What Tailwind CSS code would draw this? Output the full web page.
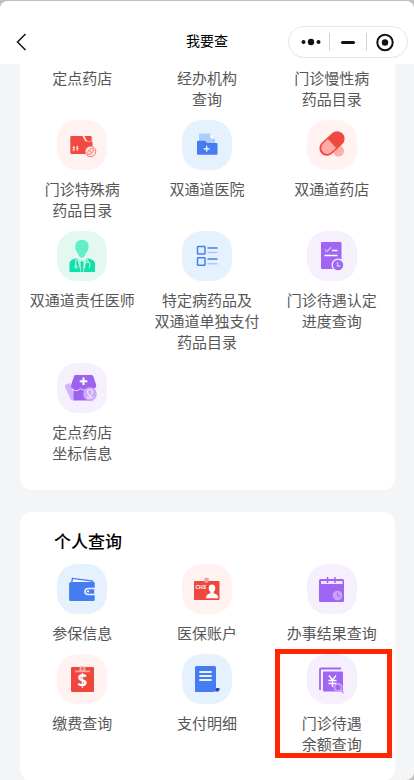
<!DOCTYPE html>
<html lang="zh-CN">
<head>
<meta charset="utf-8">
<meta name="viewport" content="width=device-width, initial-scale=1">
<title>我要查</title>
<script src="https://cdn.jsdelivr.net/npm/@tailwindcss/browser@4"></script>
</head>
<body class="h-screen overflow-hidden bg-[#c2bfc1] pt-px font-['Noto_Sans_CJK_SC',sans-serif]">
<div class="flex h-full flex-col overflow-hidden rounded-t-lg rounded-br-lg bg-[#f4f5f7]">
  <header class="grid shrink-0 grid-cols-[1fr_auto_1fr] items-center bg-white px-1.5 pt-[25px] pb-1.5">
    <button type="button" aria-label="返回" class="flex h-8 w-8 items-center justify-center">
      <svg class="h-5 w-5" viewBox="0 0 20 20" fill="none" stroke="#111" stroke-width="1.500"><path d="M13.500 2 5.500 10l8 8"/></svg>
    </button>
    <h1 class="pb-1 text-sm leading-7 text-black">我要查</h1>
    <div class="flex h-8 w-[120px] items-center justify-self-end rounded-full border border-[#e6e6e6] bg-white">
      <button type="button" aria-label="更多" class="flex flex-1 justify-center pl-1">
        <svg class="h-5 w-5" viewBox="0 0 20 20" fill="#111"><circle cx="2.500" cy="10" r="2"/><circle cx="10" cy="10" r="3.200"/><circle cx="17.500" cy="10" r="2"/></svg>
      </button>
      <span class="h-[18px] w-px bg-[#d4d4d4]"></span>
      <button type="button" aria-label="最小化" class="flex w-9 justify-center">
        <svg class="h-5 w-5" viewBox="0 0 20 20"><path d="M4.500 10.500h11" stroke="#111" stroke-width="3" stroke-linecap="round"/></svg>
      </button>
      <span class="h-[18px] w-px bg-[#d4d4d4]"></span>
      <button type="button" aria-label="关闭" class="flex flex-1 justify-center pr-1">
        <svg class="h-5 w-5" viewBox="0 0 20 20"><circle cx="10" cy="10.500" r="7.700" fill="none" stroke="#111" stroke-width="2"/><circle cx="10" cy="10.500" r="3.200" fill="#111"/></svg>
      </button>
    </div>
  </header>

  <main class="flex flex-col gap-[22px] pr-[19px] pl-5 text-[15px] leading-[21px] text-[#575757]">
    <section class="grid grid-cols-3 rounded-b-xl bg-white pt-[3px] pr-px pb-4 text-center">
      <a href="#" class="pb-[11px]">定点药店</a>
      <a href="#" class="pb-[11px]">经办机构<br>查询</a>
      <a href="#" class="pb-[11px]">门诊慢性病<br>药品目录</a>

      <a href="#" class="flex flex-col items-center gap-2 pb-[11px]">
        <svg class="h-[50px] w-[50px] rounded-[20px] bg-[#fff2f1]" viewBox="0 0 50 50">
          <path d="M14.500 16h11l3 5.500H35q.5 0 .5.500v12H14.500q-1.200 0-1.200-1.200V17.200q0-1.200 1.200-1.200z" fill="#f24940"/>
          <path d="M27.300 16h6.200q1.200 0 1.200 1.200v4h-4.500z" fill="#f24940"/>
          <path d="M15.500 27.500h2.500m-1.200-1.700v5.500M15.500 30l2.600-.8M19 27h2.400m-2.600 1.900h2.800M20.300 25.800v5.500" fill="none" stroke="#ffe0dd" stroke-width=".9"/>
          <circle cx="33.500" cy="31.500" r="5.300" fill="#ffe2df" stroke="#f47870" stroke-width="1"/>
          <g transform="rotate(-42 33.500 31.500)" fill="none" stroke="#f58982"><rect x="30" y="29.700" width="7" height="3.600" rx="1.800"/><path d="M33.500 29.700v3.600"/></g>
        </svg>
        <span>门诊特殊病<br>药品目录</span>
      </a>
      <a href="#" class="flex flex-col items-center gap-2 pb-[11px]">
        <svg class="h-[50px] w-[50px] rounded-[20px] bg-[#e5f2fd]" viewBox="0 0 50 50">
          <path d="M18 13.500h10.500l4.500 5V27H17V14.500q0-1 1-1z" fill="#adcdfb"/>
          <path d="M28.500 13.500v4q0 1 1 1H33z" fill="#fff"/>
          <path d="M16 20.800h7l2 2.200h9.500q1 0 1 1v9.800q0 1-1 1H16q-1 0-1-1v-12q0-1 1-1z" fill="#467cf1"/>
          <path d="M24.700 25.800v6m-3-3h6" stroke="#fff" stroke-width="1.200"/>
        </svg>
        <span>双通道医院</span>
      </a>
      <a href="#" class="flex flex-col items-center gap-2 pb-[11px]">
        <svg class="h-[50px] w-[50px] rounded-[20px] bg-[#fff2f1]" viewBox="0 0 50 50">
          <circle cx="31.500" cy="31" r="5.500" fill="#ffb0a9"/>
          <g transform="rotate(-43 25 23.500)">
            <rect x="10.500" y="16" width="29" height="15" rx="7.500" fill="#f0493f"/>
            <path d="M25 17.500h-6.500a6 6 0 0 0 0 12H25z" fill="#ffaaa3"/>
          </g>
        </svg>
        <span>双通道药店</span>
      </a>

      <a href="#" class="flex flex-col items-center gap-2 pb-[11px]">
        <svg class="h-[50px] w-[50px] rounded-[20px] bg-[#e2f8f1]" viewBox="0 0 50 50">
          <path d="M25 9c4.500 0 7 2.800 6.500 7.500-.3 3-1.600 5.200-3.300 6.500v2L25 27l-3.500-2V23c-1.700-1.300-2.900-3.500-3.200-6.500C17.900 11.800 20.500 9 25 9z" fill="#62efc7"/>
          <path d="M20 27 24 41H12.500V32.500c0-3 3.500-4.500 7.500-5.500zM30 27 26 41h12V32.500c0-3-4-4.500-8-5.500z" fill="#13dfab"/>
          <path d="m21 27.500 4 2.500 4-2.500L26.500 41h-3z" fill="#b4f6e3"/>
          <path d="m25 29.500 1.500 2L26 41h-2l-.5-9.500z" fill="#20d7a7"/>
          <path d="M19.500 27.500q-1.300 4-.8 7M30 27.500q1.500 2 1.300 4m-4 4.700c.3-3 1.600-5.200 3.700-5.200 2.200 0 2.500 3.400.9 6.500M27.300 36l1 1" fill="none" stroke="#d2fff2" stroke-width="1"/>
          <circle cx="19" cy="35.800" r="1.300" fill="none" stroke="#d2fff2" stroke-width=".9"/>
        </svg>
        <span>双通道责任医师</span>
      </a>
      <a href="#" class="flex flex-col items-center gap-2 pb-[11px]">
        <svg class="h-[50px] w-[50px] rounded-[20px] bg-[#e5f2fd]" viewBox="0 0 50 50">
          <g fill="none" stroke="#477ef2" stroke-width="1.500"><rect x="15.500" y="15.500" width="7.500" height="7.500" rx=".6"/><rect x="15.500" y="26.800" width="7.500" height="7.500" rx=".6"/></g>
          <path d="M25.500 17H35.500M25.500 28H35.500" stroke="#477ef2" stroke-width="1.700"/>
          <path d="M25.500 21.500H35.500M25.500 32.700H35.500" stroke="#a9c8fc" stroke-width="1.500"/>
        </svg>
        <span>特定病药品及<br>双通道单独支付<br>药品目录</span>
      </a>
      <a href="#" class="flex flex-col items-center gap-2 pb-[11px]">
        <svg class="h-[50px] w-[50px] rounded-[20px] bg-[#f6f0fe]" viewBox="0 0 50 50">
          <rect x="14" y="11" width="20.500" height="27" rx="1.300" fill="#a066f3"/>
          <path d="m18 18.500 2 2 4-4.200" fill="none" stroke="#d2b4ff" stroke-width="1.400"/>
          <path d="M25 19.500h5.500M17.500 24.500H30.500" stroke="#fff" stroke-width="1.500"/>
          <circle cx="31" cy="34" r="6.500" fill="#f6f0fe"/><circle cx="31" cy="34" r="5.200" fill="#a066f3"/>
          <path d="M30.500 31v4H33.500" fill="none" stroke="#d9c1ff" stroke-width="1.300"/>
        </svg>
        <span>门诊待遇认定<br>进度查询</span>
      </a>

      <a href="#" class="flex flex-col items-center gap-2 pb-[11px]">
        <svg class="h-[50px] w-[50px] rounded-[20px] bg-[#f6f0fe]" viewBox="0 0 50 50">
          <path d="m13 20-4 1.500q-1.500.7-1 2.500l5.500 12q.8 1.500 2.500 1.500h3z" fill="#d1b2fc"/>
          <path d="M18.500 12h16q1.300 0 1.700 1l3 9q.4 2-1.200 3.200L36.500 26v10q0 1.500-1.500 1.500H18q-1.500 0-1.500-1.500V26l-1.700-.8q-1.200-1-.8-3l3-9q.4-1.200 1.500-1.200z" fill="#9d63ee"/>
          <path d="m16 26 1.500 1.500 3.500 0 2.500-2 3.500 2 3-2 2.500 1.500" fill="none" stroke="#e7d5ff" stroke-width="1"/>
          <path d="M26.500 14.500v7.500M22.700 18.200h7.600" stroke="#fff" stroke-width="2"/>
          <circle cx="33" cy="31" r="6.800" fill="#cda9fb"/>
          <path d="M33 33.500c-1.600-2-2.500-3.300-2.500-4.500a2.500 2.500 0 0 1 5 0c0 1.200-.9 2.500-2.500 4.500zM29.700 34q3.300 2 6.600 0" fill="none" stroke="#f3eaff" stroke-width="1.100"/>
        </svg>
        <span>定点药店<br>坐标信息</span>
      </a>
    </section>

    <section class="rounded-xl bg-white pt-4 pb-4">
      <h2 class="px-[34px] pb-2.5 text-[17px] leading-[26px] font-medium text-black">个人查询</h2>
      <div class="grid grid-cols-3 pr-px text-center">
        <a href="#" class="flex flex-col items-center gap-2 pb-[11px]">
          <svg class="h-[50px] w-[50px] rounded-[20px] bg-[#e5f2fd]" viewBox="0 0 50 50">
            <path d="m15.500 14.300 20 2.700v3h-21z" fill="#f7fbff" stroke="#467cf1" stroke-width="1.300"/>
            <path d="M14 18h22.500q1.200 0 1.200 1.200v16.600q0 1.200-1.200 1.200H13.300q-1.200 0-1.200-1.200V19.500q0-1.500 1.900-1.500z" fill="#467cf1"/>
            <path d="M38 24.500h-7a3 3 0 0 0 0 6h7z" fill="#467cf1" stroke="#e5f2fd" stroke-width="1.600"/>
            <circle cx="31" cy="27.400" r="1.100" fill="#fff"/>
          </svg>
          <span>参保信息</span>
        </a>
        <a href="#" class="flex flex-col items-center gap-2 pb-[11px]">
          <svg class="h-[50px] w-[50px] rounded-[20px] bg-[#fff2f1]" viewBox="0 0 50 50">
            <rect x="12" y="17" width="25.500" height="19" rx="1" fill="#ee473e"/>
            <path d="M22 14.500q2.500-1.500 5 0l-.7 3.500q-1.800 2-3.600 0z" fill="#f8a29c"/>
            <text x="13.500" y="24.500" font-family="Liberation Sans, sans-serif" font-size="5" font-weight="700" font-style="italic" fill="#fff">CHS</text>
            <path d="M30 20.500c2.200 0 3.400 1.500 3.300 3.800-.1 1.800-.8 3-1.700 3.700v1.300c2.600.9 4.600 1.500 4.600 4.900H24c0-3.400 2-4 4.400-4.900V28c-.9-.7-1.600-1.900-1.700-3.700-.1-2.300 1.100-3.800 3.300-3.800z" fill="#fff"/>
          </svg>
          <span>医保账户</span>
        </a>
        <a href="#" class="flex flex-col items-center gap-2 pb-[11px]">
          <svg class="h-[50px] w-[50px] rounded-[20px] bg-[#f6f0fe]" viewBox="0 0 50 50">
            <rect x="12" y="15" width="25" height="23" rx="1.500" fill="#a066f3"/>
            <path d="M14 17h21.500v3H14z" fill="#f0e5ff"/>
            <path d="M20.500 13v6M28 13v6" stroke="#a066f3" stroke-width="1.500"/>
            <circle cx="30.500" cy="31.500" r="4.800" fill="#c8a4fa"/>
            <path d="M30.500 28.500v3.500h2.700" fill="none" stroke="#a066f3" stroke-width="1"/>
          </svg>
          <span>办事结果查询</span>
        </a>

        <a href="#" class="flex flex-col items-center gap-2 pb-[11px]">
          <svg class="h-[50px] w-[50px] rounded-[20px] bg-[#fff2f1]" viewBox="0 0 50 50">
            <rect x="14" y="13" width="23" height="25" rx="1.200" fill="#ee473e"/>
            <path d="M22.500 12.500h6v4H33v1.800H18v-1.800h4.500z" fill="#f9a7a1"/>
            <rect x="24.500" y="13.500" width="2" height="2" fill="#ee473e"/>
            <text x="25.400" y="32.800" text-anchor="middle" font-family="Open Sans, sans-serif" font-size="17" font-weight="700" fill="#fff">$</text>
          </svg>
          <span>缴费查询</span>
        </a>
        <a href="#" class="flex flex-col items-center gap-2 pb-[11px]">
          <svg class="h-[50px] w-[50px] rounded-[20px] bg-[#e5f2fd]" viewBox="0 0 50 50">
            <path d="M14.500 12h18q1.500 0 1.500 1.500v20q0 1.500 1 1.500h1v2H33l-1.500 1H14q-1 0-1-1V13.500q0-1.500 1.500-1.500z" fill="#467cf1"/>
            <path d="M34 34h3.500v1.800q0 1.700-1.800 1.700H33q1-1 1-3.500z" fill="#2450a9"/>
            <path d="M18 18h11M18 22h11M18 26h11" stroke="#e9f1ff" stroke-width="1.800" stroke-linecap="round"/>
          </svg>
          <span>支付明细</span>
        </a>
        <a href="#" class="relative flex flex-col items-center gap-2 pb-[11px]">
          <svg class="h-[50px] w-[50px] rounded-[20px] bg-[#f6f0fe]" viewBox="0 0 50 50">
            <path d="M13 36V15.500Q13 14.500 14 14.500H34" fill="none" stroke="#a066f3" stroke-width="1.800"/>
            <rect x="16" y="17.500" width="20" height="20" rx="1" fill="#a066f3"/>
            <path d="m22 21.500 3.500 4.500 3.500-4.500M25.500 26v7M21.500 26.500h8M21.500 29.500h8" fill="none" stroke="#fff" stroke-width="1.400"/>
            <circle cx="31" cy="33.500" r="3.600" fill="#a066f3" stroke="#c9a5fc" stroke-width="1.700"/>
            <path d="m33.700 36 3 3" stroke="#c9a5fc" stroke-width="1.800"/>
          </svg>
          <span>门诊待遇<br>余额查询</span>
          <span class="absolute -top-[5px] right-0.5 bottom-[7px] left-1.5 border-5 border-[#ff2600]"></span>
        </a>
      </div>
    </section>
  </main>
</div>
</body>
</html>
